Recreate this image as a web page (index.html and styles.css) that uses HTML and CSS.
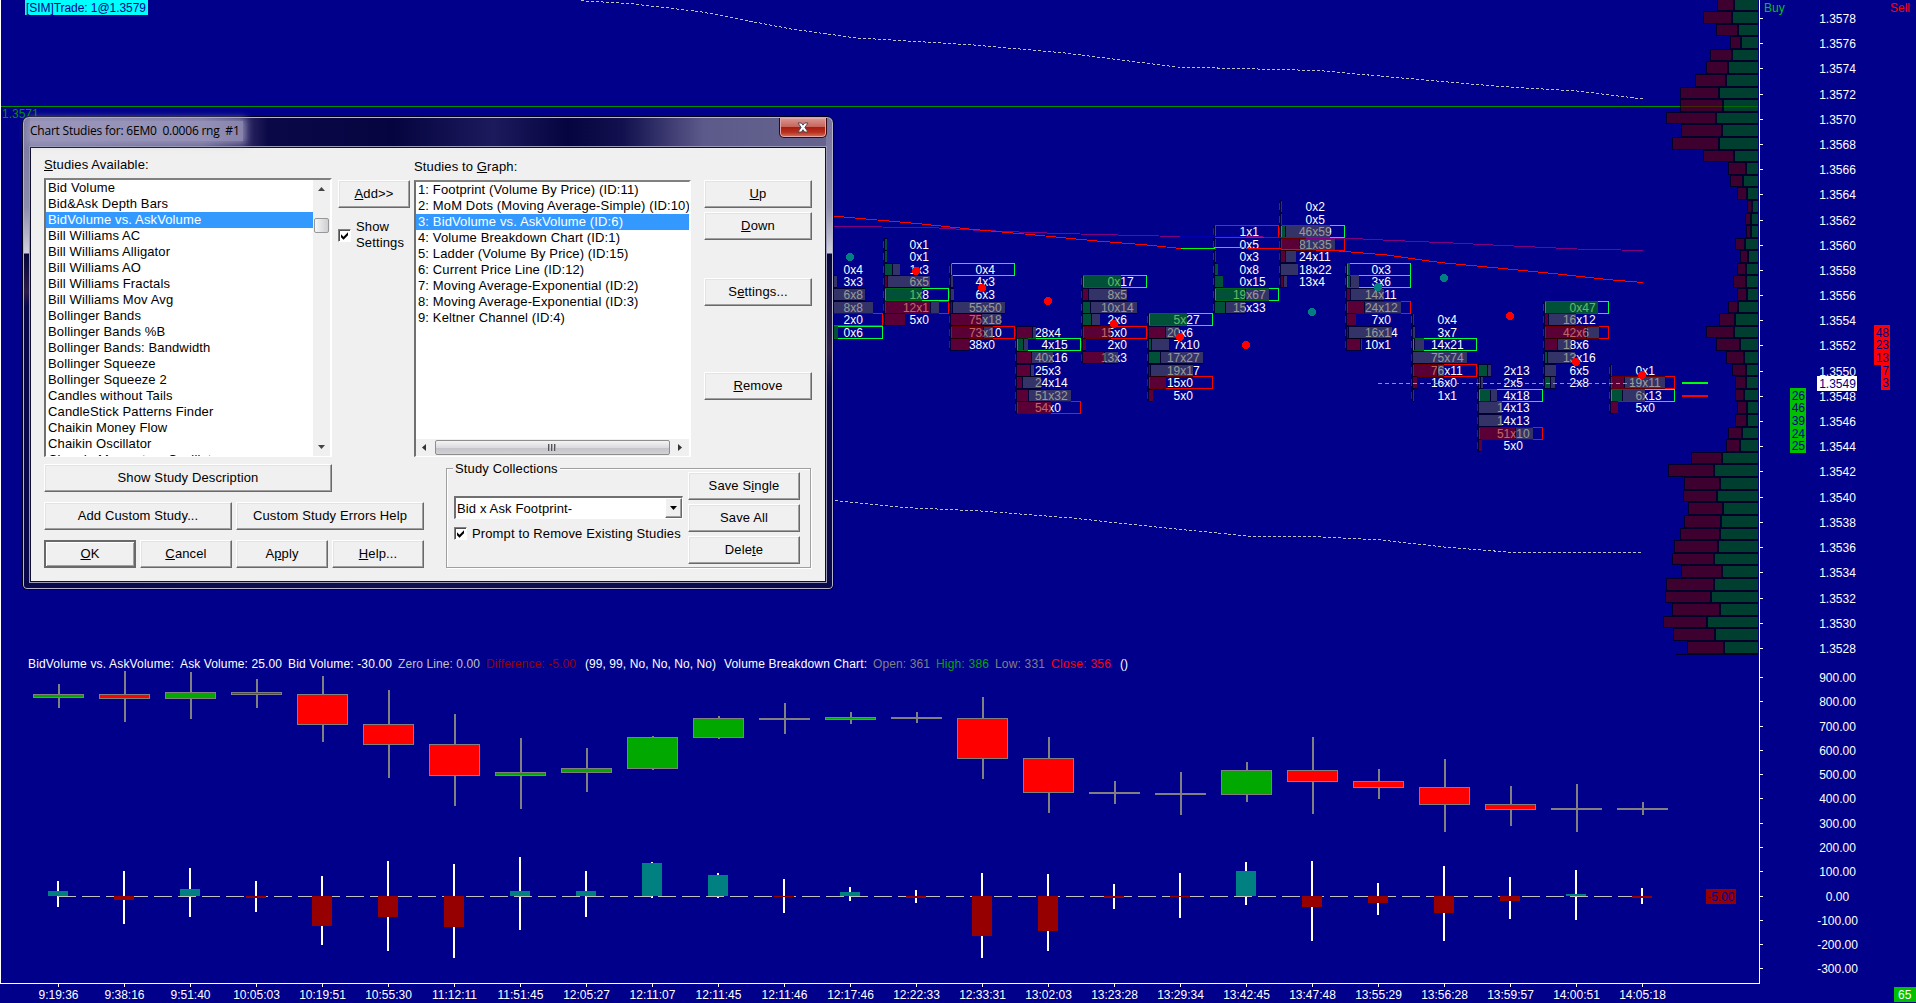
FILE: index.html
```html
<!DOCTYPE html>
<html lang="en">
<head>
  <meta charset="UTF-8">
  <meta name="viewport" content="width=device-width, initial-scale=1.0">
  <title>6EM0 0.0006 rng #1</title>
  <link rel="stylesheet" href="styles.css">
</head>
<body>
  <svg id="chart" class="chart" width="1916" height="1003" viewBox="0 0 1916 1003"></svg>

  <div class="dialog">
    <div class="titlebar">
      <span class="title">Chart Studies for: 6EM0&nbsp; 0.0006 rng&nbsp; #1</span>
      <button class="close" aria-label="Close">
        <svg width="12" height="11" viewBox="0 0 12 11"><path d="M1 1h3.4L6 3.2 7.6 1H11L7.9 5.4 11 10H7.6L6 7.7 4.4 10H1l3.1-4.6z" fill="#fff" stroke="#4a4a60" stroke-width="1"/></svg>
      </button>
    </div>

    <div class="client">
      <div class="top">
        <div class="col-available">
          <div class="label"><u>S</u>tudies Available:</div>
          <div class="listbox available">
            <ul>
              <li>Bid Volume</li>
              <li>Bid&amp;Ask Depth Bars</li>
              <li class="selected">BidVolume vs. AskVolume</li>
              <li>Bill Williams AC</li>
              <li>Bill Williams Alligator</li>
              <li>Bill Williams AO</li>
              <li>Bill Williams Fractals</li>
              <li>Bill Williams Mov Avg</li>
              <li>Bollinger Bands</li>
              <li>Bollinger Bands %B</li>
              <li>Bollinger Bands: Bandwidth</li>
              <li>Bollinger Squeeze</li>
              <li>Bollinger Squeeze 2</li>
              <li>Candles without Tails</li>
              <li>CandleStick Patterns Finder</li>
              <li>Chaikin Money Flow</li>
              <li>Chaikin Oscillator</li>
              <li>Chande Momentum Oscillator</li>
            </ul>
            <div class="vscroll">
              <svg width="7" height="4"><path d="M0 4L3.5 0 7 4z" fill="#444"/></svg>
              <div class="vthumb"></div>
              <svg class="arrow-down" width="7" height="4"><path d="M0 0h7L3.5 4z" fill="#444"/></svg>
            </div>
          </div>
        </div>

        <div class="col-add">
          <button class="btn"><u>A</u>dd&gt;&gt;</button>
          <label class="check show-settings">
            <span class="box"><svg width="9" height="9"><path d="M1 3.2L3.5 5.700 8 1.200V4.200L3.500 8.700 1 6.200z" fill="#000"/></svg></span>
            <span>Show<br>Settings</span>
          </label>
        </div>

        <div class="col-graph">
          <div class="label">Studies to <u>G</u>raph:</div>
          <div class="listbox graph">
            <ul>
              <li>1: Footprint (Volume By Price) (ID:11)</li>
              <li>2: MoM Dots (Moving Average-Simple) (ID:10)</li>
              <li class="selected">3: BidVolume vs. AskVolume (ID:6)</li>
              <li>4: Volume Breakdown Chart (ID:1)</li>
              <li>5: Ladder (Volume By Price) (ID:15)</li>
              <li>6: Current Price Line (ID:12)</li>
              <li>7: Moving Average-Exponential (ID:2)</li>
              <li>8: Moving Average-Exponential (ID:3)</li>
              <li>9: Keltner Channel (ID:4)</li>
            </ul>
            <div class="hscroll">
              <svg width="4" height="7"><path d="M4 0v7L0 3.5z" fill="#333"/></svg>
              <div class="hthumb"><i></i><i></i><i></i></div>
              <svg width="4" height="7"><path d="M0 0v7l4-3.500z" fill="#333"/></svg>
            </div>
          </div>
        </div>

        <div class="col-actions">
          <button class="btn"><u>U</u>p</button>
          <button class="btn down"><u>D</u>own</button>
          <button class="btn settings">S<u>e</u>ttings...</button>
          <button class="btn remove"><u>R</u>emove</button>
        </div>
      </div>

      <div class="bottom">
        <div class="buttons">
          <button class="btn describe">Show Study Description</button>
          <div class="row">
            <button class="btn wide">Add Custom Study...</button>
            <button class="btn wide">Custom Study Errors Help</button>
          </div>
          <div class="row">
            <button class="btn default"><u>O</u>K</button>
            <button class="btn"><u>C</u>ancel</button>
            <button class="btn">A<u>p</u>ply</button>
            <button class="btn"><u>H</u>elp...</button>
          </div>
        </div>

        <div class="group">
          <div class="group-left">
            <div class="legend"><span>Study Collections</span></div>
            <div class="combo">
              <span>Bid x Ask Footprint-</span>
              <div class="drop"><svg width="7" height="4"><path d="M0 0h7L3.500 4z" fill="#000"/></svg></div>
            </div>
            <label class="check">
              <span class="box"><svg width="9" height="9"><path d="M1 3.2L3.5 5.700 8 1.200V4.200L3.500 8.700 1 6.200z" fill="#000"/></svg></span>
              <span class="prompt">Prompt to Remove Existing Studies</span>
            </label>
          </div>
          <div class="group-right">
            <button class="btn">Save S<u>i</u>ngle</button>
            <button class="btn">Save All</button>
            <button class="btn">Dele<u>t</u>e</button>
          </div>
        </div>
      </div>
    </div>
  </div>

  <script src="script.js"></script>
</body>
</html>
```
FILE: styles.css
```css
:root {
  --navy: #00008b;
  --face: #f0f0f0;
  --select: #3399ff;
}

* {
  box-sizing: border-box;
}

body {
  margin: 0;
  width: 1916px;
  height: 1003px;
  overflow: hidden;
  position: relative;
  background: var(--navy);
  font-family: "Liberation Sans", Arial, sans-serif;
}

/* chart */
.chart {
  display: block;
  shape-rendering: crispEdges;
  font-family: "Liberation Sans", Arial, sans-serif;
  font-size: 12px;
}

/* study dialog, floats over the chart */
.dialog {
  position: absolute;
  left: 22px;
  top: 116px;
  width: 812px;
  height: 474px;
  padding: 1px 6px 6px;
  border: 1px solid #000018;
  border-radius: 7px 7px 5px 5px;
  box-shadow: inset 0 0 0 1px #b4b4cc;
  background:
    linear-gradient(180deg, #77739d 0, #8c8cac 90px, #d0d0dc 136px, #05053c 137px, #2c1c48 175px, #08084a 190px, transparent 191px) left top / 7px 100% no-repeat,
    linear-gradient(180deg, #77739d 0, #8c8cac 90px, #d0d0dc 136px, #05053c 137px, #2c1c48 235px, #08084a 270px, transparent 271px) right top / 7px 100% no-repeat,
    linear-gradient(90deg, #8a86ac 0, #6c6898 180px, #0b0848 245px, #050440 370px, #1c1a5c 470px, #050440 545px, #12104e 600px, #5c5a8a 680px, #66648e 100%) left top / 100% 30px no-repeat,
    linear-gradient(90deg, #08084a, #10104e 50%, #08084a);
}

.titlebar {
  display: flex;
  justify-content: space-between;
  height: 28px;
  padding-left: 1px;
}

.title {
  align-self: flex-start;
  height: 20px;
  margin-top: 3px;
  padding: 0 3px 0 0;
  font-family: "Open Sans", sans-serif;
  font-size: 12px;
  letter-spacing: -0.22px;
  line-height: 19px;
  color: #000;
  background: rgba(158, 154, 190, 0.8);
  box-shadow: 0 0 7px 3px rgba(158, 154, 190, 0.8);
}

.close {
  display: flex;
  align-items: center;
  justify-content: center;
  width: 48px;
  height: 20px;
  padding: 0;
  border: 1px solid #300818;
  border-top: 0;
  border-radius: 0 0 5px 5px;
  box-shadow: inset 0 0 0 1px #e0a8a8;
  background: linear-gradient(180deg, #d99a92 0, #c8665c 45%, #a81e10 50%, #b83020 75%, #d8745c 100%);
}

.client {
  height: 437px;
  padding: 10px 14px 0 14px;
  border: 1px solid #9a9ab8;
  background: var(--face);
  box-shadow: inset 0 0 0 1px #10102c;
  font-size: 13px;
  letter-spacing: 0.13px;
  color: #000;
}

.top {
  display: flex;
  height: 302px;
}

.label {
  line-height: 16px;
  white-space: nowrap;
}

.col-available {
  width: 288px;
  margin-right: 6px;
}

.listbox {
  border: 2px solid #696969;
  border-color: #808080 #fff #fff #707070;
  background: #fff;
  overflow: hidden;
}

.listbox ul {
  flex: 1;
  margin: 0;
  padding: 0;
  list-style: none;
}

.listbox li {
  height: 16px;
  padding-left: 2px;
  line-height: 16px;
  white-space: nowrap;
}

.listbox .selected {
  background: var(--select);
  color: #fff;
}

.available {
  display: flex;
  height: 279px;
  margin-top: 5px;
  border-bottom-width: 1px;
}

.vscroll {
  display: flex;
  flex-direction: column;
  align-items: center;
  width: 17px;
  padding: 7px 0;
  background: #f0f0f0;
}

.vthumb {
  width: 15px;
  height: 15px;
  margin-top: 27px;
  border: 1px solid #979797;
  border-radius: 2px;
  background: linear-gradient(90deg, #f6f6f6, #cfcfd3);
}

.arrow-down {
  margin-top: auto;
}

.col-add {
  width: 72px;
  margin-right: 4px;
  padding-top: 23px;
}

.col-add .btn {
  width: 72px;
}

.check {
  display: flex;
  align-items: center;
}

.check .box {
  display: flex;
  align-items: center;
  justify-content: center;
  flex: none;
  width: 13px;
  height: 13px;
  margin-right: 5px;
  border: 1px solid #808080;
  border-right-color: #fff;
  border-bottom-color: #fff;
  box-shadow: inset 1px 1px 0 #505050;
  background: #fff;
}

.show-settings {
  margin-top: 11px;
  line-height: 16px;
}

.col-graph {
  width: 277px;
  margin-right: 13px;
  padding-top: 2px;
}

.graph {
  display: flex;
  flex-direction: column;
  height: 277px;
  margin-top: 5px;
  border-bottom-width: 1px;
}

.hscroll {
  display: flex;
  align-items: center;
  justify-content: space-between;
  height: 17px;
  padding: 0 7px 0 6px;
  background: #f0f0f0;
}

.hthumb {
  display: flex;
  align-items: center;
  justify-content: center;
  gap: 1px;
  width: 235px;
  height: 15px;
  border: 1px solid #8e8e8e;
  border-radius: 2px;
  background: linear-gradient(180deg, #f4f4f4, #dcdce0 50%, #c4c4c8 52%, #d2d2d6);
}

.hthumb i {
  width: 2px;
  height: 7px;
  background: linear-gradient(90deg, #555 50%, #aaa 50%);
}

.col-actions {
  display: flex;
  flex-direction: column;
  width: 108px;
  padding-top: 23px;
}

.col-actions .down {
  margin-top: 4px;
}

.col-actions .settings {
  margin-top: 38px;
}

.col-actions .remove {
  margin-top: 66px;
}

.btn {
  flex: none;
  height: 28px;
  padding: 0 0 2px;
  border: 1px solid #fff;
  border-right-color: #696969;
  border-bottom-color: #696969;
  box-shadow: inset -1px -1px 0 #a0a0a0, inset 1px 1px 0 #e3e3e3;
  background: var(--face);
  font: inherit;
  letter-spacing: inherit;
  color: #000;
}

.default {
  border: 2px solid #696969;
  box-shadow: inset 1px 1px 0 #fff, inset -1px -1px 0 #a0a0a0;
}

.bottom {
  display: flex;
  gap: 22px;
  padding-top: 5px;
}

.buttons {
  display: flex;
  flex-direction: column;
  gap: 10px;
  width: 380px;
}

.describe {
  width: 288px;
}

.row {
  display: flex;
  gap: 4px;
}

.row .btn {
  width: 92px;
}

.row .wide {
  width: 188px;
}

.group {
  display: flex;
  justify-content: space-between;
  width: 365px;
  height: 100px;
  margin-top: 4px;
  padding: 0 10px 0 7px;
  border: 1px solid #a0a0a0;
  box-shadow: inset 1px 1px 0 #fff, 1px 1px 0 #fff;
}

.group-left {
  width: 229px;
}

.legend {
  height: 16px;
  margin-top: -8px;
  line-height: 16px;
}

.legend span {
  margin-left: -1px;
  padding: 0 2px;
  background: var(--face);
}

.combo {
  display: flex;
  align-items: center;
  justify-content: space-between;
  height: 23px;
  margin-top: 19px;
  padding: 0 0 0 1px;
  border: 2px solid #707070;
  border-right: 1px solid #fff;
  border-bottom: 1px solid #fff;
  background: #fff;
}

.drop {
  display: flex;
  align-items: center;
  justify-content: center;
  width: 17px;
  height: 20px;
  border: 1px solid #fff;
  border-right-color: #696969;
  border-bottom-color: #696969;
  box-shadow: inset -1px -1px 0 #a0a0a0;
  background: var(--face);
}

.group-left .check {
  height: 16px;
  margin-top: 6px;
}

.prompt {
  white-space: nowrap;
}

.group-right {
  display: flex;
  flex-direction: column;
  gap: 4px;
  padding-top: 3px;
}

.group-right .btn {
  width: 112px;
}
```
FILE: script.js
```js
const svg = document.getElementById('chart');
const NS = 'http://www.w3.org/2000/svg';

function add(tag, attrs, text) {
  const el = document.createElementNS(NS, tag);
  for (const k in attrs) el.setAttribute(k, attrs[k]);
  if (text !== undefined) el.textContent = text;
  svg.appendChild(el);
  return el;
}
function rect(x, y, w, h, fill) {
  return add('rect', { x: x, y: y, width: w, height: h, fill: fill });
}
function text(x, y, str, fill, anchor) {
  return add('text', { x: x, y: y, fill: fill || '#fff', 'text-anchor': anchor || 'start' }, str);
}
function line(points, stroke, dash) {
  const a = { points: points, fill: 'none', stroke: stroke };
  if (dash) a['stroke-dasharray'] = dash;
  return add('polyline', a);
}
function outline(x, y, w, h, stroke) {
  return add('rect', { x: x + 0.5, y: y + 0.5, width: w - 1, height: h - 1, fill: 'none', stroke: stroke });
}

// last two digits of the price -> y
const priceY = p => Math.floor(18.4 + (78 - p) * 12.6);

// keltner channel
line('581,0.7 630,3.6 700,11.6 791,29 855,37.8 974,45 1065,53 1177,67 1318,70.5 1402,78 1500,86.5 1577,91 1643,99', '#c0c0c0', '3 2');
line('835,500.5 904,507.5 981,511 1072,518 1156,527 1247,536 1304,536 1381,540 1444,547 1507,552 1570,553 1643,552', '#c0c0c0', '3 2');

// price marker line
rect(1, 106, 1757, 1, '#009000');
text(2, 118, '1.3571', '#009000');

// footprint bars: [bar index, top price, [bid, ask, colour, width, grey right edge, outline]...]
const footprint = [
  [12, 58, [0, 4, 'g', 1, 1], [3, 3, 'g', 0, 18], [6, 8, 'g', 0, 46], [8, 8, 'g', 0, 54], [2, 0, 'm', 0, 0, 'r'], [0, 6, 'g', 19, 0, 'g']],
  [13, 60, [0, 1, 'g', 2, 0], [0, 1, 'g', 2, 0], [1, 3, 'g', 7, 15], [6, 5, 'm', 2, 45], [1, 8, 'g', 37, 0, 'g'], [12, 1, 'm', 45, 54, 'r'], [5, 0, 'm', 20, 0]],
  [14, 58, [0, 4, 'g', 1, 0, 'g'], [4, 3, 'm', 0, 2], [6, 3, 'm', 0, 3], [55, 50, 'm', 1, 54], [75, 18, 'm', 30, 50], [73, 10, 'm', 32, 42, 'r'], [38, 0, 'm', 18, 0]],
  [15, 53, [28, 4, 'm', 15, 19], [4, 15, 'g', 6, 11, 'g'], [40, 16, 'm', 14, 36], [25, 3, 'm', 13, 17], [24, 14, 'm', 5, 24], [51, 32, 'm', 11, 54], [54, 0, 'm', 34, 0, 'r']],
  [16, 57, [0, 17, 'g', 38, 0, 'g'], [8, 5, 'm', 5, 44], [10, 14, 'g', 7, 54], [2, 6, 'g', 8, 17], [15, 0, 'm', 28, 0, 'r'], [2, 0, 'm', 3, 0], [13, 3, 'm', 21, 35]],
  [17, 54, [5, 27, 'g', 38, 0, 'g'], [20, 6, 'm', 16, 30], [7, 10, 'g', 2, 20], [17, 27, 'g', 11, 54], [19, 17, 'm', 1, 44], [15, 0, 'm', 17, 0, 'r'], [5, 0, 'm', 4, 0]],
  [18, 61, [1, 1, 'm', 0, 0, 'r'], [0, 5, 'g', 1, 0], [0, 3, 'g', 1, 0], [0, 8, 'g', 3, 0], [0, 15, 'g', 8, 0], [19, 67, 'g', 30, 54, 'g'], [15, 33, 'g', 10, 30]],
  [19, 63, [0, 2, 'g', 1, 0], [0, 5, 'g', 1, 0], [46, 59, 'g', 4, 49, 'g'], [81, 35, 'm', 18, 54, 'r'], [24, 11, 'm', 4, 15], [18, 22, 'g', 0, 17], [13, 4, 'm', 2, 6]],
  [20, 58, [0, 3, 'g', 3, 0, 'g'], [3, 6, 'g', 3, 12, 'g'], [14, 11, 'm', 3, 37], [24, 12, 'm', 17, 54, 'r'], [7, 0, 'm', 9, 0], [16, 14, 'm', 1, 45], [10, 1, 'm', 13, 15]],
  [21, 54, [0, 4, 'g', 1, 0], [3, 7, 'g', 0, 2], [14, 21, 'g', 1, 11, 'g'], [75, 74, 'm', 0, 54], [76, 11, 'm', 24, 31, 'r'], [16, 0, 'm', 4, 0], [1, 1, 'm', 0, 1]],
  [22, 50, [2, 13, 'g', 8, 12], [2, 5, 'g', 1, 4], [4, 18, 'g', 11, 18, 'g'], [14, 13, 'm', 0, 23], [14, 13, 'm', 0, 23], [51, 10, 'm', 36, 54, 'r'], [5, 0, 'm', 3, 0]],
  [23, 55, [0, 47, 'g', 53, 0, 'g'], [16, 12, 'm', 3, 31], [42, 6, 'm', 41, 54, 'r'], [18, 6, 'm', 12, 26], [13, 16, 'g', 2, 30], [6, 5, 'm', 0, 11], [2, 8, 'g', 5, 10]],
  [24, 50, [0, 1, 'g', 1, 0], [19, 11, 'm', 13, 54, 'r'], [6, 13, 'g', 11, 34, 'g'], [5, 0, 'm', 7, 0]]
];
const fills = { g: 'rgba(0,135,0,.6)', m: 'rgba(150,0,0,.6)' };
const strokes = { g: '#00ff40', r: '#ff0000' };

footprint.forEach(([i, top, ...cells]) => {
  const left = 885 + 66 * (i - 13);
  cells.forEach(([bid, ask], n) => {
    const y = priceY(top - n) + 4;
    text(left + 31.3, y, bid, '#fff', 'end');
    text(left + 31.3, y, 'x' + ask);
  });
  cells.forEach(([, , color, w, grey, box], n) => {
    const y = priceY(top - n) - 7;
    if (box) outline(left, y, 64, 13, strokes[box]);
  });
  cells.forEach(([, , color, w, grey], n) => {
    const y = priceY(top - n) - 7;
    const full = Math.max(w, grey);
    if (!full) return;
    rect(left, y, full, 1, 'rgba(0,0,0,.6)');
    rect(left, y + 12, full, 1, 'rgba(0,0,0,.6)');
    if (w) rect(left, y + 1, w, 11, fills[color]);
    if (grey > w) {
      if (w) rect(left + w, y + 1, 1, 11, 'rgba(0,0,0,.6)');
      rect(left + w + (w ? 1 : 0), y + 1, grey - w - (w ? 1 : 0), 11, 'rgba(85,85,80,.6)');
    }
  });
  rect(left - 2, priceY(top) - 7, 2, cells.length * 12.6, '#000038');
  cells.forEach(([, , color], n) => rect(left - 2, priceY(top - n) - 4, 1, 7, color == 'g' ? '#204048' : '#402040'));
});

// moving averages
line('833,226.5 930,227.5 973,230 1030,232.500 1097,234.500 1180,236.500', '#800080');
line('1180,236.5 1246,236.5', '#0000b0');
line('1246,236.500 1280,237.500 1330,238.500 1363,239 1393,240.500 1453,243 1503,245.500 1577,249 1643,250.500', '#800080');
line('833,216 883,220.500 917,223.500 969,229 1030,234.500 1097,241 1147,245 1181,248.500', '#ff0000');
line('1181,248.500 1214,248.500 1214,247.500 1246,247.500', '#00ff00');
line('1246,248 1333,250.500 1387,255 1440,262.500 1503,268.500 1553,273.500 1607,279.500 1643,282.500', '#ff0000');

// last price
line('1378,383.5 1645,383.500', '#00ff00', '4 3');
rect(1682, 382, 26, 2, '#00ff00');
rect(1682, 395, 26, 2, '#ff0000');

// momentum dots
[[850, 257, 't'], [916, 271], [982, 288], [1048, 301], [1114, 324], [1180, 337], [1246, 345], [1312, 312, 't'],
 [1378, 287, 't'], [1444, 278, 't'], [1510, 316], [1576, 362], [1642, 375]].forEach(([x, y, t]) => {
  add('circle', { cx: x, cy: y, r: 4, fill: t ? '#008080' : '#ff0000' });
});

// volume profile, from price 79 down: [left edge, green start], in thirds of a pixel from x = 1630
const profile = [
  [260, 316], [218, 310], [257, 328], [300, 337], [240, 310], [228, 298], [194, 292], [150, 271], [150, 283], [107, 262],
  [153, 280], [126, 271], [218, 316], [294, 352], [300, 343], [320, 355], [350, 370], [344, 367], [348, 367], [314, 349],
  [329, 358], [320, 352], [308, 352], [320, 355], [294, 328], [266, 319], [228, 316], [258, 334], [288, 346], [306, 352],
  [315, 352], [315, 346], [320, 355], [314, 355], [294, 340], [288, 334], [183, 280], [114, 256], [162, 274], [159, 265],
  [174, 283], [162, 277], [150, 274], [132, 268], [126, 256], [153, 280], [108, 256], [105, 247], [126, 274], [98, 235],
  [129, 259], [170, 286]
];
profile.forEach(([l, g], n) => {
  const y = priceY(79 - n) - 7;
  const h = priceY(78 - n) - priceY(79 - n);
  const x1 = 1630 + Math.round(l / 3);
  const x2 = 1630 + Math.round(g / 3);
  // dark frame drawn as four bands so the fills keep a single alpha layer
  rect(x1, y, 1758 - x1, 1, 'rgba(0,0,0,.7)');
  rect(x1, y + h - 1, 1758 - x1, 1, 'rgba(0,0,0,.7)');
  rect(x1, y + 1, 1, h - 2, 'rgba(0,0,0,.7)');
  rect(x2 - 2, y + 1, 2, h - 2, 'rgba(0,0,0,.7)');
  rect(x1 + 1, y + 1, x2 - x1 - 3, h - 2, 'rgba(88,0,8,.7)');
  rect(x2, y + 1, 1758 - x2, h - 2, 'rgba(0,88,8,.7)');
});
rect(1675, 654, 83, 1, '#00002a');

// axes
rect(0, 0, 1, 984, '#fff');
rect(0, 983, 1760, 1, '#fff');
rect(1759, 0, 1, 984, '#fff');
for (let p = 78; p >= 28; p -= 2) {
  rect(1760, priceY(p), 3, 1, '#fff');
  text(1837.5, priceY(p) + 5, '1.35' + p, '#fff', 'middle');
}
for (let v = 900; v >= -300; v -= 100) {
  const y = Math.round(677 + (900 - v) * 0.2428);
  rect(1760, y, 3, 1, '#fff');
  text(1837.5, y + 5, v.toFixed(2), '#fff', 'middle');
}

// bid / ask depth
rect(1817, 376, 40, 15, '#fff');
text(1837.5, 388, '1.3549', '#00008b', 'middle');
[48, 23, 13, 7, 3].forEach((v, n) => {
  const x = v > 9 ? 1874 : 1881;
  rect(x, priceY(53 - n) - 8, 1890 - x, 15, '#ff0000');
});
[48, 23, 13, 7, 3].forEach((v, n) => text(1889, priceY(53 - n) + 4, v, '#00008b', 'end'));
for (let n = 0; n < 5; n++) rect(1790, priceY(48 - n) - 8, 16, 15, '#00c000');
[26, 46, 39, 24, 25].forEach((v, n) => text(1805, priceY(48 - n) + 4, v, '#00008b', 'end'));

text(1764, 12, 'Buy', '#00c020');
text(1910, 12, 'Sell', '#ff0000', 'end');
rect(25, 0, 123, 15, '#00ffff');
text(26, 12, '[SIM]Trade: 1@1.3579', '#00008b').setAttribute('textLength', 120);

// study header: [x, width, text, colour]
[
  [28, 146, 'BidVolume vs. AskVolume:', '#fff'],
  [180, 102, 'Ask Volume: 25.00', '#fff'],
  [288, 104, 'Bid Volume: -30.00', '#fff'],
  [398, 82, 'Zero Line: 0.00', '#c0c0c0'],
  [486, 90, 'Difference: -5.00', '#960000'],
  [585, 131, '(99, 99, No, No, No, No)', '#fff'],
  [724, 143, 'Volume Breakdown Chart:', '#fff'],
  [873, 57, 'Open: 361', '#808080'],
  [936, 53, 'High: 386', '#00a800'],
  [995, 50, 'Low: 331', '#808080'],
  [1051, 60, 'Close: 356', '#ff0000'],
  [1120, 8, '()', '#fff']
].forEach(([x, w, s, c]) => text(x, 668, s, c).setAttribute('textLength', w));

// volume breakdown candles: high, body top, body bottom, low (thirds of a pixel below y = 640)
const candles = [
  [132, 162, 174, 204, 'g'], [93, 162, 177, 246, 'r'], [96, 156, 177, 237, 'g'], [117, 156, 165, 204, 'r'],
  [108, 162, 255, 306, 'r'], [150, 252, 315, 414, 'r'], [222, 312, 408, 498, 'r'], [294, 396, 408, 507, 'g'],
  [324, 384, 399, 456, 'g'], [288, 291, 387, 390, 'g'], [228, 234, 294, 297, 'g'], [189, 234, 240, 282, 'n'],
  [216, 231, 240, 252, 'g'], [216, 231, 237, 249, 'n'], [171, 234, 357, 417, 'r'], [291, 354, 459, 519, 'r'],
  [423, 456, 462, 492, 'n'], [396, 459, 465, 525, 'n'], [366, 390, 465, 486, 'g'], [291, 390, 426, 522, 'r'],
  [387, 423, 444, 477, 'r'], [357, 441, 495, 576, 'r'], [438, 492, 510, 558, 'r'], [432, 504, 510, 576, 'n'],
  [486, 504, 510, 525, 'n']
];
const bodies = { g: '#00a800', r: '#ff0000', n: '#808080' };
candles.forEach(([high, top, bottom, low, c], i) => {
  const x = 33 + 66 * i;
  rect(x + 25, 640 + high / 3, 2, (low - high) / 3, '#808080');
  rect(x, 640 + top / 3, 51, (bottom - top) / 3, '#808080');
  if (c != 'n') rect(x + 1, 641 + top / 3, 49, (bottom - top) / 3 - 2, bodies[c]);
});

// bid vs ask volume: high, low, difference
const volumes = [
  [723, 801, 753], [693, 852, 780], [684, 831, 747], [723, 816, 774], [708, 915, 858],
  [663, 933, 831], [672, 954, 861], [651, 870, 753], [693, 831, 753], [666, 774, 669],
  [699, 774, 705], [717, 819, 771], [741, 783, 756], [750, 789, 774], [699, 954, 888],
  [702, 933, 873], [732, 807, 774], [699, 834, 771], [666, 795, 693], [663, 903, 801],
  [729, 825, 789], [678, 903, 819], [711, 837, 783], [690, 840, 762], [744, 792, 774]
];
volumes.forEach(([high, low], i) => rect(57 + 66 * i, 640 + high / 3, 2, (low - high) / 3, '#fff'));
line('58,896.5 1643,896.5', '#c0c0c0', '18 6');
volumes.forEach(([, , diff], i) => {
  const x = 48 + 66 * i;
  if (diff < 768) rect(x, 640 + diff / 3, 20, (768 - diff) / 3, '#008080');
  else rect(x, 896, 20, (diff - 768) / 3, '#960000');
});
rect(1706, 889, 30, 15, '#960000');
text(1734.5, 901, '-5.00', '#00008b', 'end');

// time axis
['9:19:36', '9:38:16', '9:51:40', '10:05:03', '10:19:51', '10:55:30', '11:12:11', '11:51:45', '12:05:27',
 '12:11:07', '12:11:45', '12:11:46', '12:17:46', '12:22:33', '12:33:31', '13:02:03', '13:23:28', '13:29:34',
 '13:42:45', '13:47:48', '13:55:29', '13:56:28', '13:59:57', '14:00:51', '14:05:18'].forEach((t, i) => {
  rect(58 + 66 * i, 984, 1, 3, '#fff');
  text(58.5 + 66 * i, 999, t, '#fff', 'middle');
});
rect(1894, 987, 22, 15, '#00c000');
text(1898, 999, '65', '#fff');
```
